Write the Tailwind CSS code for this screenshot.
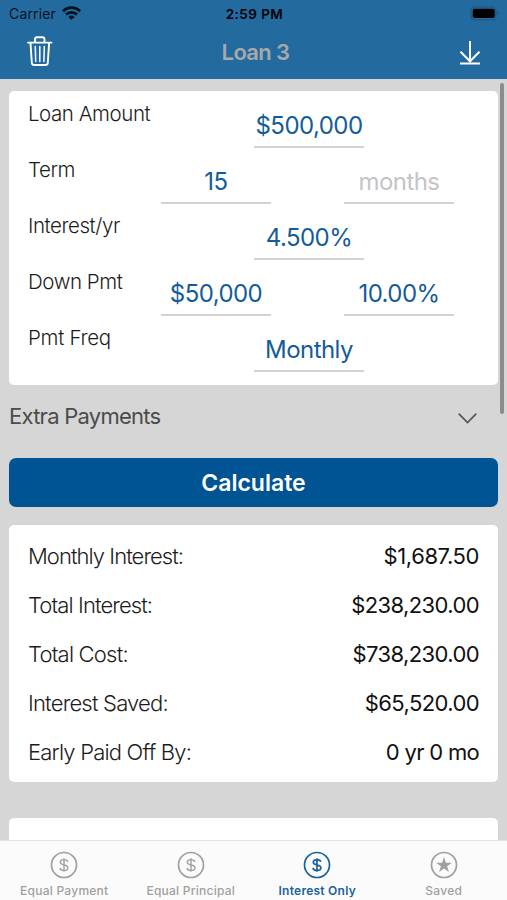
<!DOCTYPE html>
<html lang="en">
<head>
  <meta charset="UTF-8">
  <meta name="viewport" content="width=device-width, initial-scale=1.0">
  <title>Loan 3</title>
  <script src="https://cdn.jsdelivr.net/npm/@tailwindcss/browser@4"></script>
</head>
<body class="relative flex flex-col h-[900px] w-[507px] overflow-hidden bg-[#d6d6d6] font-['Inter',sans-serif] text-black">

  <!-- Header -->
  <header class="h-[79px] shrink-0 bg-[#236a9f]">
    <div class="grid grid-cols-3 items-center h-7 pl-[9px] pr-[7px]">
      <div class="flex items-center gap-[6px] pb-[2px]">
        <span class="text-[14px] tracking-[0.15px] text-black/85">Carrier</span>
        <svg class="w-[19px] h-[14px] -mt-[1px]" viewBox="0 0 19 14" fill="none" stroke="#06121b" stroke-width="2.8">
          <path d="M1 5.2a12 12 0 0 1 17 0"/>
          <path d="M4 8.6a7.8 7.8 0 0 1 11 0"/>
          <path d="M9.5 13.8 6.4 10.9a4.4 4.4 0 0 1 6.2 0z" fill="#06121b" stroke="none"/>
        </svg>
      </div>
      <span class="text-center text-[13.5px] font-semibold tracking-[0.45px]">2:59 PM</span>
      <svg class="w-[30px] h-[15px] justify-self-end -mt-[2px]" viewBox="0 0 30 15">
        <rect x="1" y="1" width="25" height="13" rx="4" fill="none" stroke="#1c5580" stroke-width="1.2"/>
        <rect x="2.7" y="2.7" width="22" height="9.4" rx="2" fill="#000"/>
        <path d="M27.5 5.5v4a2.2 2.2 0 0 0 0-4z" fill="#1c5580"/>
      </svg>
    </div>
    <div class="grid grid-cols-3 items-center h-12 pl-[27px] pr-[26px]">
      <svg class="w-[26px] h-[31px] -mt-[2px]" viewBox="0 0 26 31" fill="none" stroke="#fff" stroke-width="1.9" stroke-linecap="round" stroke-linejoin="round">
        <path d="M1 6.6h23.5M8 6.3V3.4Q8 1.2 10 1.2h5.5q2 0 2 2.2v2.900"/>
        <path d="M3.5 7l1.300 19.800q.2 2.200 2.400 2.200h11.200q2.200 0 2.400-2.200L22.100 7"/>
        <path d="M8.300 10.500l.4 15M12.800 10.500v15M17.300 10.500l-.4 15" stroke-width="1.5"/>
      </svg>
      <h1 class="pl-[3px] text-center text-[22px] font-semibold tracking-[-0.65px] text-[#a7a9ab]">Loan 3</h1>
      <svg class="w-[22px] h-[25px] justify-self-end" viewBox="0 0 22 25" fill="none" stroke="#fff" stroke-width="2">
        <path d="M11 1v20M1.500 11.800l9.500 9.500 9.500-9.500M1 23.400h20"/>
      </svg>
    </div>
  </header>

  <!-- Content -->
  <main class="flex-1 min-h-0 overflow-hidden px-[9px] pt-3">
    <section class="w-[489px] h-[294px] pt-[1px] pl-[19px] rounded-[5px] bg-white text-[24px] leading-[30px] tracking-[-0.55px] text-[#145c99]">
      <div class="flex h-14">
        <label class="w-[226px] pt-[7px] text-[20.5px] font-light tracking-[-0.45px] text-[#1c1c1c]">Loan Amount</label>
        <div class="w-[110px] pt-[19px] border-b-2 border-[#d2d2d2] text-center whitespace-nowrap">$500,000</div>
      </div>
      <div class="flex h-14">
        <label class="w-[133px] pt-[7px] text-[20.5px] font-light tracking-[-0.45px] text-[#1c1c1c]">Term</label>
        <div class="w-[110px] mr-[73px] pt-[19px] border-b-2 border-[#d2d2d2] text-center">15</div>
        <div class="w-[110px] pt-[19px] border-b-2 border-[#d2d2d2] text-center text-[#c4c4c6]">months</div>
      </div>
      <div class="flex h-14">
        <label class="w-[226px] pt-[7px] text-[20.5px] font-light tracking-[-0.45px] text-[#1c1c1c]">Interest/yr</label>
        <div class="w-[110px] pt-[19px] border-b-2 border-[#d2d2d2] text-center">4.500%</div>
      </div>
      <div class="flex h-14">
        <label class="w-[133px] pt-[7px] text-[20.5px] font-light tracking-[-0.45px] text-[#1c1c1c]">Down Pmt</label>
        <div class="w-[110px] mr-[73px] pt-[19px] border-b-2 border-[#d2d2d2] text-center">$50,000</div>
        <div class="w-[110px] pt-[19px] border-b-2 border-[#d2d2d2] text-center">10.00%</div>
      </div>
      <div class="flex h-14">
        <label class="w-[226px] pt-[7px] text-[20.5px] font-light tracking-[-0.3px] text-[#1c1c1c]">Pmt Freq</label>
        <div class="w-[110px] pt-[19px] border-b-2 border-[#d2d2d2] text-center">Monthly</div>
      </div>
    </section>

    <div class="flex items-center justify-between h-[73px] pb-[11px] pr-[21px]">
      <span class="text-[22px] tracking-[-0.75px] text-[#4b4b4b]">Extra Payments</span>
      <svg class="w-[19px] h-[11px] mt-[5px]" viewBox="0 0 19 11" fill="none" stroke="#555" stroke-width="1.7" stroke-linecap="round">
        <path d="M1.200 1.200l8.300 8.300 8.300-8.300"/>
      </svg>
    </div>

    <button class="block w-[489px] h-[49px] pt-[1px] rounded-[7px] bg-[#005493] text-[23px] font-semibold text-white">Calculate</button>

    <section class="w-[489px] h-[257px] mt-[18px] pt-[7px] px-[19px] rounded-[5px] bg-white text-[22px] tracking-[-0.6px] text-[#111]">
      <div class="flex items-center justify-between h-[49px]">
        <span class="font-light tracking-[-0.95px] text-[#1c1c1c]">Monthly Interest:</span>
        <span class="tracking-[-0.4px]">$1,687.50</span>
      </div>
      <div class="flex items-center justify-between h-[49px]">
        <span class="font-light tracking-[-0.9px] text-[#1c1c1c]">Total Interest:</span>
        <span>$238,230.00</span>
      </div>
      <div class="flex items-center justify-between h-[49px]">
        <span class="font-light tracking-[-0.8px] text-[#1c1c1c]">Total Cost:</span>
        <span>$738,230.00</span>
      </div>
      <div class="flex items-center justify-between h-[49px]">
        <span class="font-light tracking-[-0.8px] text-[#1c1c1c]">Interest Saved:</span>
        <span>$65,520.00</span>
      </div>
      <div class="flex items-center justify-between h-[49px]">
        <span class="font-light tracking-[-0.8px] text-[#1c1c1c]">Early Paid Off By:</span>
        <span class="tracking-[-0.7px]">0 yr 0 mo</span>
      </div>
    </section>

    <section class="w-[489px] h-10 mt-9 rounded-[5px] bg-white"></section>
  </main>

  <!-- Scroll indicator -->
  <div class="absolute right-[3px] top-[83px] w-1 h-[331px] rounded-full bg-[#8c8c8c]"></div>

  <!-- Tab bar -->
  <nav class="grid grid-cols-4 h-[60px] shrink-0 pl-[1px] border-t border-[#e4e4e4] bg-[#fbfbfb] text-[12px] leading-4 font-medium tracking-[0.25px] text-[#a0a0a0]">
    <a class="flex flex-col items-center pt-[10px] gap-1">
      <svg class="w-7 h-7" viewBox="0 0 28 28" fill="none" stroke="currentColor" stroke-width="1.7">
        <circle cx="14" cy="14" r="12.5"/>
        <path d="M14 7.200v13.600M17.800 10.900c-.3-1.500-1.800-2.300-3.800-2.300-2.200 0-3.700 1-3.700 2.700 0 3.900 7.600 1.500 7.600 5.400 0 1.700-1.600 2.700-3.900 2.700-2.200 0-3.800-.9-4-2.600" stroke-width="1.4"/>
      </svg>
      <span class="whitespace-nowrap">Equal Payment</span>
    </a>
    <a class="flex flex-col items-center pt-[10px] gap-1">
      <svg class="w-7 h-7" viewBox="0 0 28 28" fill="none" stroke="currentColor" stroke-width="1.7">
        <circle cx="14" cy="14" r="12.5"/>
        <path d="M14 7.200v13.600M17.800 10.900c-.3-1.500-1.800-2.300-3.800-2.300-2.200 0-3.700 1-3.700 2.700 0 3.900 7.600 1.500 7.600 5.400 0 1.700-1.600 2.700-3.900 2.700-2.200 0-3.800-.9-4-2.600" stroke-width="1.4"/>
      </svg>
      <span class="whitespace-nowrap">Equal Principal</span>
    </a>
    <a class="flex flex-col items-center pt-[10px] gap-1 text-[#1b629d]">
      <svg class="w-7 h-7" viewBox="0 0 28 28" fill="none" stroke="currentColor" stroke-width="1.7">
        <circle cx="14" cy="14" r="12.5"/>
        <path d="M14 7.200v13.600M17.800 10.900c-.3-1.500-1.800-2.300-3.800-2.300-2.200 0-3.700 1-3.700 2.700 0 3.900 7.600 1.500 7.600 5.400 0 1.700-1.600 2.700-3.900 2.700-2.200 0-3.800-.9-4-2.600"/>
      </svg>
      <span class="whitespace-nowrap font-semibold">Interest Only</span>
    </a>
    <a class="flex flex-col items-center pt-[10px] gap-1">
      <svg class="w-7 h-7" viewBox="0 0 28 28" fill="none" stroke="currentColor" stroke-width="1.7">
        <circle cx="14" cy="14" r="12.5"/>
        <path d="M14 6l1.900 5.700h6l-4.800 3.600 1.800 5.700-4.900-3.500L9.100 21l1.800-5.700-4.800-3.600h6z" fill="currentColor" stroke="none"/>
      </svg>
      <span class="whitespace-nowrap">Saved</span>
    </a>
  </nav>

</body>
</html>
